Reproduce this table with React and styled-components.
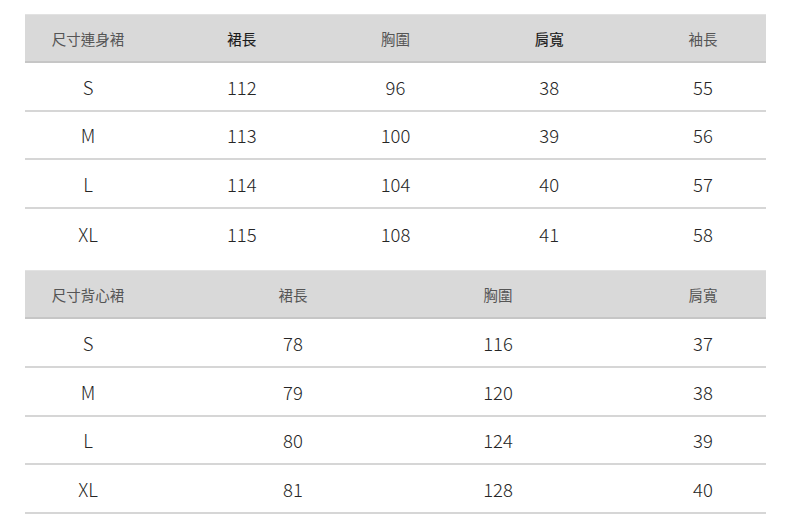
import React from "react";
import styled, { createGlobalStyle } from "styled-components";

const GlobalStyle = createGlobalStyle`
  body {
    margin: 0;
    background: #fff;
    font-family: "Noto Sans CJK TC", "Noto Sans", sans-serif;
  }
`;

const Page = styled.div`
  display: flex;
  flex-direction: column;
  gap: 13px;
  padding: 14px 24px 0 25px;
  width: 790px;
  box-sizing: border-box;
`;

const Table = styled.div`
  display: flex;
  flex-direction: column;
`;

const Row = styled.div`
  display: grid;
  grid-template-columns: repeat(${(p) => p.cols}, 126px);
  justify-content: space-between;
  align-items: center;
  height: 48.6px;
  box-sizing: border-box;
  border-bottom: ${(p) => (p.last ? "none" : "2px solid #d6d6d6")};
`;

const HeaderRow = styled(Row)`
  height: 49px;
  background: #d9d9d9;
  border-top: 1px solid #e2e2e2;
  border-bottom: 2px solid #c6c6c6;
`;

const HeadCell = styled.div`
  text-align: center;
  font-size: 14.5px;
  color: ${(p) => (p.strong ? "#1a1a1a" : "#555")};
  -webkit-text-stroke: ${(p) => (p.strong ? "0.15px #1a1a1a" : "0")};
`;

const Cell = styled.div`
  text-align: center;
  font-size: 18.5px;
  font-weight: 300;
  color: #262626;
  padding-top: 1px;
`;

const dress = {
  head: [
    ["尺寸連身裙", false],
    ["裙長", true],
    ["胸圍", false],
    ["肩寬", true],
    ["袖長", false],
  ],
  rows: [
    ["S", 112, 96, 38, 55],
    ["M", 113, 100, 39, 56],
    ["L", 114, 104, 40, 57],
    ["XL", 115, 108, 41, 58],
  ],
  lastBorder: false,
};

const vest = {
  head: [
    ["尺寸背心裙", false],
    ["裙長", false],
    ["胸圍", false],
    ["肩寬", false],
  ],
  rows: [
    ["S", 78, 116, 37],
    ["M", 79, 120, 38],
    ["L", 80, 124, 39],
    ["XL", 81, 128, 40],
  ],
  lastBorder: true,
};

function SizeTable({ data }) {
  const cols = data.head.length;
  return (
    <Table>
      <HeaderRow cols={cols}>
        {data.head.map(([label, strong]) => (
          <HeadCell key={label} strong={strong}>
            {label}
          </HeadCell>
        ))}
      </HeaderRow>
      {data.rows.map((r, i) => (
        <Row
          key={r[0]}
          cols={cols}
          last={i === data.rows.length - 1 && !data.lastBorder}
        >
          {r.map((v, j) => (
            <Cell key={j}>{v}</Cell>
          ))}
        </Row>
      ))}
    </Table>
  );
}

export default function App() {
  return (
    <>
      <GlobalStyle />
      <Page>
        <SizeTable data={dress} />
        <SizeTable data={vest} />
      </Page>
    </>
  );
}
